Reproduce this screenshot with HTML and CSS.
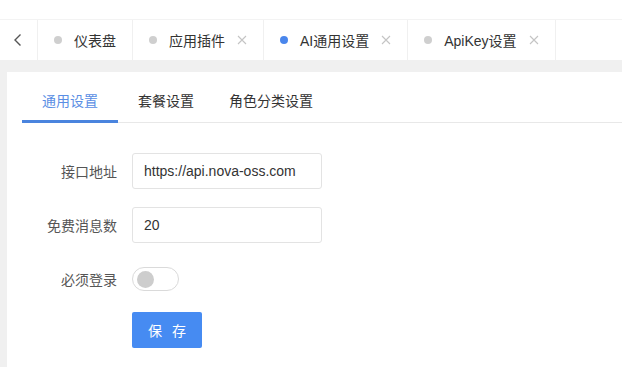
FILE: index.html
```html
<!DOCTYPE html>
<html lang="zh">
<head>
<meta charset="utf-8">
<title>AI通用设置</title>
<link rel="stylesheet" href="styles.css">
</head>
<body>
<div class="topbar"></div>
<div class="tabbar">
  <div class="arrow">
    <svg width="10" height="14" viewBox="0 0 10 14"><path d="M7.5 1.5 L2 7 L7.5 12.5" fill="none" stroke="#555" stroke-width="1.4"/></svg>
  </div>
  <div class="tab"><span class="dot"></span><span class="tab-label">仪表盘</span></div>
  <div class="tab"><span class="dot"></span><span class="tab-label">应用插件</span><svg class="close" width="10" height="10" viewBox="0 0 10 10"><path d="M1 1 L9 9 M9 1 L1 9" stroke="#c4c4c4" stroke-width="1.1" fill="none"/></svg></div>
  <div class="tab"><span class="dot dot-active"></span><span class="tab-label">AI通用设置</span><svg class="close" width="10" height="10" viewBox="0 0 10 10"><path d="M1 1 L9 9 M9 1 L1 9" stroke="#c4c4c4" stroke-width="1.1" fill="none"/></svg></div>
  <div class="tab"><span class="dot"></span><span class="tab-label">ApiKey设置</span><svg class="close" width="10" height="10" viewBox="0 0 10 10"><path d="M1 1 L9 9 M9 1 L1 9" stroke="#c4c4c4" stroke-width="1.1" fill="none"/></svg></div>
</div>
<div class="main">
  <div class="card">
    <div class="subtabs">
      <div class="subtab subtab-active">通用设置</div>
      <div class="subtab subtab-2">套餐设置</div>
      <div class="subtab">角色分类设置</div>
    </div>
    <div class="form">
      <div class="row">
        <label class="label">接口地址</label>
        <div class="input">https://api.nova-oss.com</div>
      </div>
      <div class="row">
        <label class="label">免费消息数</label>
        <div class="input">20</div>
      </div>
      <div class="row">
        <label class="label">必须登录</label>
        <div class="switch"><span class="knob"></span></div>
      </div>
      <div class="row row-btn">
        <span class="label"></span>
        <button class="btn">保 存</button>
      </div>
    </div>
  </div>
</div>
</body>
</html>
```

FILE: styles.css
```css
* { box-sizing: border-box; }
html, body { margin: 0; padding: 0; }
body {
  width: 622px;
  height: 367px;
  overflow: hidden;
  background: #f0f0f0;
  font-family: "Liberation Sans", "Noto Sans CJK SC", sans-serif;
  font-size: 14px;
  color: #333;
}
.topbar {
  height: 20px;
  background: #fff;
  border-bottom: 1px solid #f3f3f3;
}
.tabbar {
  height: 40px;
  background: #fff;
  display: flex;
  align-items: stretch;
}
.arrow {
  width: 38px;
  display: flex;
  align-items: center;
  justify-content: center;
  border-right: 1px solid #f0f0f0;
  padding-right: 2px;
}
.tab {
  display: flex;
  align-items: center;
  padding: 0 16px 0 16px;
  border-right: 1px solid #f0f0f0;
  color: #333;
}
.dot {
  width: 8px;
  height: 8px;
  border-radius: 50%;
  background: #cfcfcf;
  margin-right: 12px;
}
.dot-active { background: #4a86ec; }
.close {
  margin-left: 12px;
  display: block;
}
.main {
  padding: 12px 0 0 7px;
}
.card {
  background: #fff;
  height: 300px;
}
.subtabs {
  display: flex;
  margin-left: 15px;
  border-bottom: 1px solid #e8e8e8;
  height: 51px;
}
.subtab {
  position: relative;
  padding: 20px 20px 0;
  line-height: 18px;
  color: #333;
}
.subtab-2 { padding-right: 15px; }
.subtab-active { color: #5a8ee4; }
.subtab-active::after {
  content: "";
  position: absolute;
  left: 0;
  right: 0;
  bottom: -1px;
  height: 3px;
  background: #4a84de;
}
.form {
  padding-top: 30px;
}
.row {
  display: flex;
  align-items: center;
  height: 36px;
  margin-bottom: 18px;
}
.label {
  width: 110px;
  text-align: right;
  color: #555;
  margin-right: 15px;
}
.input {
  width: 190px;
  height: 36px;
  border: 1px solid #e3e3e3;
  border-radius: 3px;
  padding: 0 11px;
  line-height: 34px;
  color: #333;
}
.switch {
  width: 47px;
  height: 24px;
  border: 1px solid #dadada;
  border-radius: 12px;
  display: flex;
  align-items: center;
  padding-left: 4px;
}
.knob {
  width: 17px;
  height: 17px;
  border-radius: 50%;
  background: #cdcdcd;
}
.row-btn {
  margin-top: -3px;
}
.btn {
  width: 70px;
  height: 36px;
  border: none;
  border-radius: 2px;
  background: #468bf2;
  color: #fff;
  font-family: "Liberation Sans", "Noto Sans CJK SC", sans-serif;
  font-size: 14px;
  letter-spacing: 3px;
  padding: 0 0 0 3px;
}
```
